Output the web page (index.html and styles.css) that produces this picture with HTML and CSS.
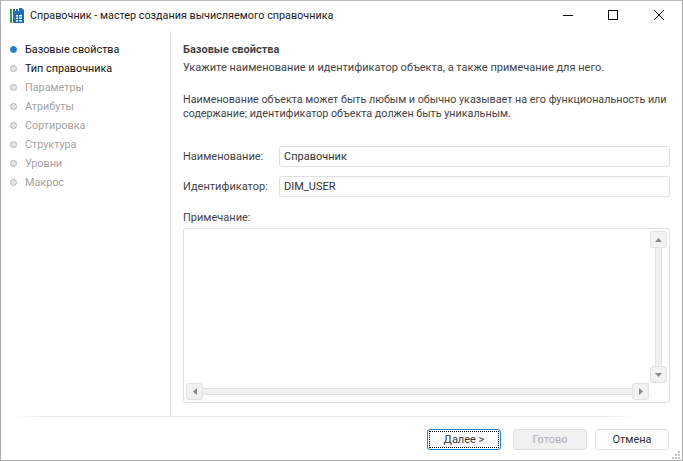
FILE: index.html
```html
<!DOCTYPE html>
<html lang="ru">
<head>
<meta charset="utf-8">
<title>Справочник</title>
<link rel="stylesheet" href="styles.css">
</head>
<body>
<div class="window">
  <header class="titlebar">
    <svg class="appicon" width="20" height="16" viewBox="0 0 20 16">
      <rect x="0" y="1" width="2" height="14" fill="#2fa84f"/>
      <path d="M3 1h2v2h1V1h2v2h1V0h2.500L14 2v13H3z" fill="#1f6fb2"/>
      <path d="M6 7h2v1.500H6zM9 7h3v1.500H9zM6 9.500h2V11H6zM9 9.500h3V11H9zM6 12h2v1.500H6zM9 12h3v1.500H9z" fill="#fff"/>
    </svg>
    <span class="titletext">Справочник - мастер создания вычисляемого справочника</span>
    <div class="winbtns">
      <svg class="winbtn" width="46" height="30" viewBox="0 0 46 30"><path d="M19 15.500h10" stroke="#000" fill="none"/></svg>
      <svg class="winbtn" width="46" height="30" viewBox="0 0 46 30"><rect x="18.500" y="10.500" width="9" height="9" stroke="#000" fill="none"/></svg>
      <svg class="winbtn" width="46" height="30" viewBox="0 0 46 30"><path d="M18 10l10 10M28 10L18 20" stroke="#000" fill="none"/></svg>
    </div>
  </header>
  <div class="main">
    <nav class="steps">
      <div class="step current"><i class="dot"></i>Базовые свойства</div>
      <div class="step active"><i class="dot"></i>Тип справочника</div>
      <div class="step"><i class="dot"></i>Параметры</div>
      <div class="step"><i class="dot"></i>Атрибуты</div>
      <div class="step"><i class="dot"></i>Сортировка</div>
      <div class="step"><i class="dot"></i>Структура</div>
      <div class="step"><i class="dot"></i>Уровни</div>
      <div class="step"><i class="dot"></i>Макрос</div>
    </nav>
    <section class="content">
      <h1 class="heading">Базовые свойства</h1>
      <p class="lead">Укажите наименование и идентификатор объекта, а также примечание для него.</p>
      <p class="desc">Наименование объекта может быть любым и обычно указывает на его функциональность или содержание; идентификатор объекта должен быть уникальным.</p>
      <div class="field first"><label class="label">Наименование:</label><div class="input">Справочник</div></div>
      <div class="field"><label class="label">Идентификатор:</label><div class="input">DIM_USER</div></div>
      <div class="notelabel">Примечание:</div>
      <div class="note">
        <div class="vscroll">
          <div class="sbtn"><svg width="7" height="4" viewBox="0 0 7 4"><path d="M3.500 0L7 4H0z" fill="#8a8a8a"/></svg></div>
          <div class="vtrack"></div>
          <div class="sbtn"><svg width="7" height="4" viewBox="0 0 7 4"><path d="M0 0h7L3.500 4z" fill="#8a8a8a"/></svg></div>
        </div>
        <div class="hscroll">
          <div class="sbtn"><svg width="4" height="7" viewBox="0 0 4 7"><path d="M4 0v7L0 3.500z" fill="#8a8a8a"/></svg></div>
          <div class="htrack"></div>
          <div class="sbtn"><svg width="4" height="7" viewBox="0 0 4 7"><path d="M0 0v7l4-3.500z" fill="#8a8a8a"/></svg></div>
        </div>
      </div>
    </section>
  </div>
  <div class="rule"></div>
  <footer class="footer">
    <button class="btn primary"><span class="focus">Далее &gt;</span></button>
    <button class="btn disabled">Готово</button>
    <button class="btn cancel">Отмена</button>
  </footer>
  <svg class="grip" width="9" height="9" viewBox="0 0 9 9"><path d="M6 0h2v2H6zM3 3h2v2H3zM6 3h2v2H6zM0 6h2v2H0zM3 6h2v2H3zM6 6h2v2H6z" fill="#c4c4c4"/></svg>
</div>
</body>
</html>
```
FILE: styles.css
```css
* { box-sizing: border-box; }
html, body { margin: 0; padding: 0; background: #fff; }
body { font-family: Roboto, "Noto Sans", sans-serif; font-size: 11px; color: #333; overflow: hidden; }
.window { position: relative; width: 683px; height: 461px; border: 1px solid #ababab; border-top-color: #b8b8b8; background: #fff; display: flex; flex-direction: column; }
.titlebar { height: 30px; display: flex; align-items: center; padding-left: 9px; flex: none; }
.appicon { flex: none; margin-top: -1px; }
.titletext { font-size: 10.8px; color: #1a1a1a; white-space: nowrap; margin-top: -1px; }
.winbtns { margin-left: auto; display: flex; margin-top: -2px; }
.winbtn { display: block; }
.main { height: 385px; flex: none; display: flex; }
.steps { width: 170px; flex: none; border-right: 1px solid #dcdcdc; padding: 9px 0 0 9px; font-size: 10.8px; }
.step { height: 19px; display: flex; align-items: center; color: #a3a3a3; white-space: nowrap; }
.step.current, .step.active { color: #111; }
.dot { width: 7px; height: 7px; border-radius: 50%; background: #e6e6e6; border: 1px solid #b5b5b5; margin-right: 8px; flex: none; }
.step.current .dot { background: #1f82c9; border-color: #1f82c9; }
.content { flex: 1; padding: 11px 12px 0 12px; min-width: 0; }
.heading { margin: 0; font-size: 11px; line-height: 15px; font-weight: 700; color: #444; }
.lead { margin: 3px 0 0; line-height: 15px; color: #444; white-space: nowrap; }
.desc { margin: 18px 0 0; font-size: 10.75px; line-height: 14px; color: #444; }
.field { display: flex; align-items: center; margin-top: 9px; }
.field.first { margin-top: 25px; }
.label { width: 96px; flex: none; color: #444; white-space: nowrap; }
.input { flex: 1; height: 21px; border: 1px solid #e0e0e0; border-radius: 3px; padding: 0 4px; line-height: 19px; color: #333; }
.notelabel { margin-top: 13px; line-height: 15px; color: #444; }
.note { position: relative; height: 175px; margin-top: 3px; border: 1px solid #e0e0e0; border-radius: 3px; }
.vscroll { position: absolute; top: 2px; right: 2px; bottom: 19px; width: 17px; display: flex; flex-direction: column; align-items: center; }
.hscroll { position: absolute; left: 2px; right: 20px; bottom: 2px; height: 17px; display: flex; align-items: center; }
.sbtn { width: 17px; height: 17px; flex: none; background: #f2f2f2; border: 1px solid #e2e2e2; border-radius: 3px; display: flex; align-items: center; justify-content: center; }
.vtrack { flex: 1; width: 7px; background: #f0f0f0; border-left: 1px solid #e2e2e2; border-right: 1px solid #e2e2e2; }
.htrack { flex: 1; height: 7px; background: #f0f0f0; border-top: 1px solid #e2e2e2; border-bottom: 1px solid #e2e2e2; }
.rule { height: 1px; margin: 0 45px 0 12px; flex: none; background: linear-gradient(to right, #fff, #e6e6e6 6%, #e6e6e6 94%, #fff); }
.footer { flex: 1; display: flex; justify-content: flex-end; padding: 12px 13px 0 0; gap: 8px; align-items: flex-start; }
.btn { width: 74px; height: 21px; border: 1px solid #e0e0e0; border-radius: 3px; background: #fff; font: inherit; color: #333; padding: 0; line-height: 19px; }
.btn.primary { margin-right: 4px; width: 74px; border-color: #1f82c9; padding: 1px; display: flex; }
.focus { flex: 1; border: 1px dotted #000; line-height: 15px; }
.btn.disabled { background: #f1f1f1; color: #b0b0b0; }
.grip { position: absolute; right: 1px; bottom: 0; }
```
